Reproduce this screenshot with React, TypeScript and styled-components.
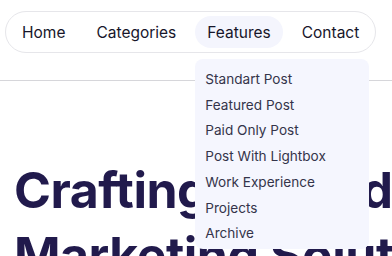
import React from 'react';
import styled, { createGlobalStyle } from 'styled-components';

const GlobalStyle = createGlobalStyle`
  html, body {
    margin: 0;
    padding: 0;
    background: #ffffff;
    font-family: Inter, "Liberation Sans", sans-serif;
    overflow: hidden;
  }
`;

const links = ['Home', 'Categories', 'Features', 'Contact'];

const featureLinks = [
  'Standart Post',
  'Featured Post',
  'Paid Only Post',
  'Post With Lightbox',
  'Work Experience',
  'Projects',
  'Archive',
];

const App: React.FC = () => {
  return (
    <Page>
      <GlobalStyle />
      <Header>
        <Nav>
          {links.map(link => (
            <NavItem key={link} $active={link === 'Features'}>
              {link}
              {link === 'Features' && (
                <Dropdown>
                  {featureLinks.map(item => (
                    <DropdownItem key={item}>{item}</DropdownItem>
                  ))}
                </Dropdown>
              )}
            </NavItem>
          ))}
        </Nav>
      </Header>
      <Hero>
        <Title>
          Crafting Unified
          <br />
          Marketing Solutions
        </Title>
      </Hero>
    </Page>
  );
};

const Page = styled.div`
  width: 392px;
  height: 256px;
  overflow: hidden;
`;

const Header = styled.header`
  height: 81px;
  border-bottom: 1px solid #d6d6da;
  padding: 11px 0 0 5px;
  box-sizing: border-box;
  position: relative;
  z-index: 2;
`;

const Nav = styled.nav`
  display: inline-flex;
  align-items: center;
  gap: 7px;
  padding: 4px;
  border: 1px solid #e6e6ea;
  border-radius: 22px;
`;

const NavItem = styled.div<{ $active?: boolean }>`
  position: relative;
  height: 32px;
  padding: 0 12px;
  display: flex;
  align-items: center;
  border-radius: 16px;
  font-size: 15.5px;
  color: #17162a;
  white-space: nowrap;
  background: ${p => (p.$active ? '#f4f5fd' : 'transparent')};
`;

const Dropdown = styled.div`
  position: absolute;
  top: 43px;
  left: 0;
  width: 174px;
  padding: 8px 10px 2px;
  box-sizing: border-box;
  background: #f5f6fe;
  border-radius: 8px;
`;

const DropdownItem = styled.div`
  font-size: 13.6px;
  line-height: 25.7px;
  color: #34344a;
`;

const Hero = styled.section`
  padding: 77px 0 0 14px;
`;

const Title = styled.h1`
  margin: 0;
  font-size: 50px;
  line-height: 65px;
  font-weight: 700;
  letter-spacing: -0.5px;
  color: #211a4c;
  white-space: nowrap;
`;

export default App;
